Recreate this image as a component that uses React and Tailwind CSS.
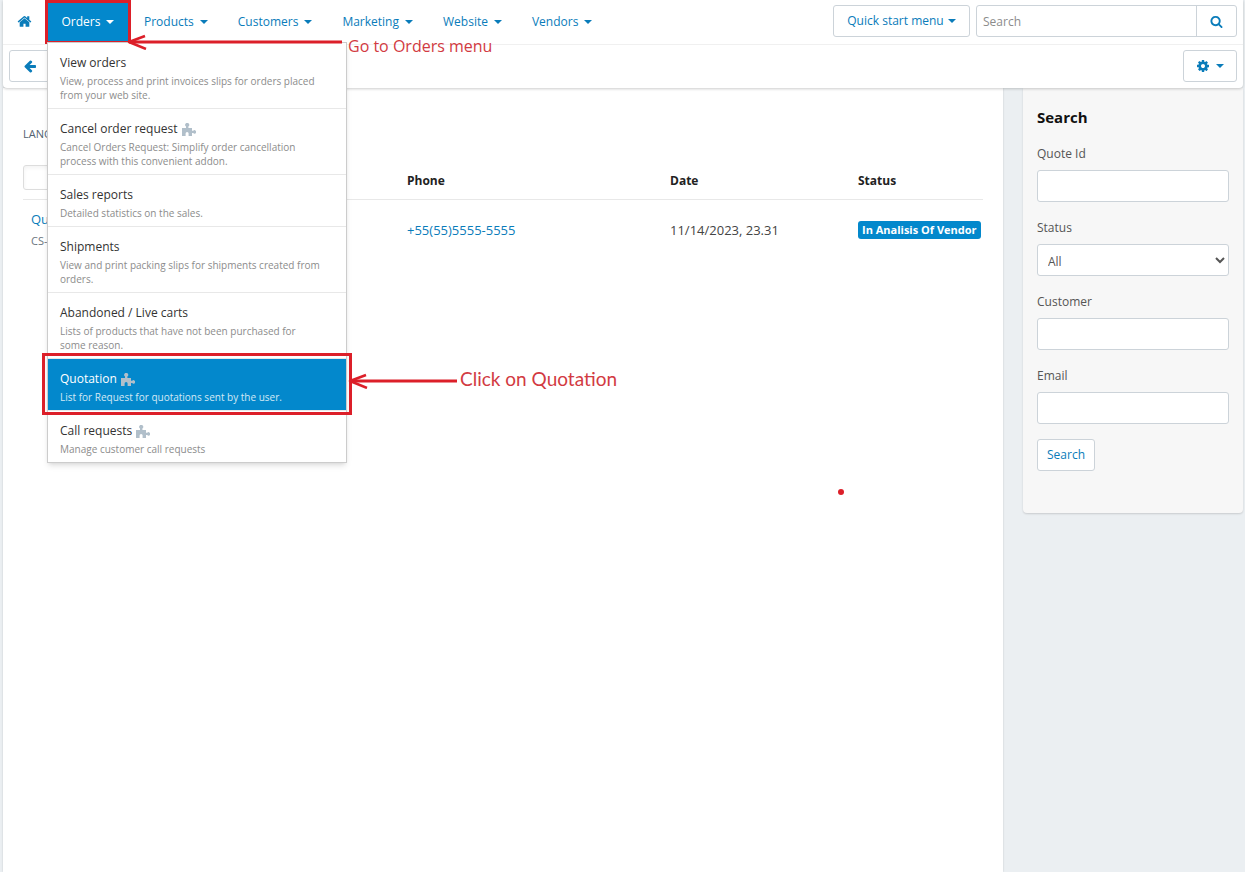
import React from 'react';

const NAV = ['Products', 'Customers', 'Marketing', 'Website', 'Vendors'];

const ORDER_MENU = [
    { title: 'View orders', text: 'View, process and print invoices slips for orders placed\nfrom your web site.' },
    { title: 'Cancel order request', addon: true, text: 'Cancel Orders Request: Simplify order cancellation\nprocess with this convenient addon.' },
    { title: 'Sales reports', text: 'Detailed statistics on the sales.' },
    { title: 'Shipments', text: 'View and print packing slips for shipments created from\norders.' },
    { title: 'Abandoned / Live carts', text: 'Lists of products that have not been purchased for\nsome reason.' },
    { title: 'Quotation', addon: true, active: true, text: 'List for Request for quotations sent by the user.' },
    { title: 'Call requests', addon: true, text: 'Manage customer call requests' },
];

const ICONS = {
    home: 'M1472 992v480q0 26-19 45t-45 19h-384v-384h-256v384h-384q-26 0-45-19t-19-45v-480q0-1 .5-3t.5-3l575-474 575 474q1 2 1 6zm223-69l-62 74q-8 9-21 11h-3q-13 0-21-7l-692-577-692 577q-12 8-24 7-13-2-21-11l-62-74q-8-10-7-23.5t11-21.5l719-599q32-26 76-26t76 26l244 204v-195q0-14 9-23t23-9h192q14 0 23 9t9 23v408l219 182q10 8 11 21.5t-7 23.5z',
    back: 'M1664 896v128q0 53-32.5 90.5t-84.5 37.5h-704l293 294q38 36 38 90t-38 90l-75 76q-37 37-90 37-52 0-91-37l-651-652q-37-37-37-90 0-52 37-91l651-650q38-38 91-38 52 0 90 38l75 74q38 38 38 91t-38 91l-293 293h704q52 0 84.5 37.5t32.5 90.5z',
    search: 'M1216 832q0-185-131.5-316.5t-316.5-131.5-316.5 131.5-131.5 316.5 131.5 316.5 316.5 131.5 316.5-131.5 131.5-316.5zm512 832q0 52-38 90t-90 38q-54 0-90-38l-343-342q-179 124-399 124-143 0-273.5-55.5t-225-150-150-225-55.5-273.5 55.5-273.5 150-225 225-150 273.5-55.5 273.5 55.5 225 150 150 225 55.5 273.5q0 220-124 399l343 343q37 37 37 90z',
    cog: 'M1152 896q0-106-75-181t-181-75-181 75-75 181 75 181 181 75 181-75 75-181zm512-109v222q0 12-8 23t-20 13l-185 28q-19 54-39 91 35 50 107 138 10 12 10 25t-9 23q-27 37-99 108t-94 71q-12 0-26-9l-138-108q-44 23-91 38-16 136-29 186-7 28-36 28h-222q-14 0-24.5-8.5t-11.5-21.5l-28-184q-49-16-90-37l-141 107q-10 9-25 9-14 0-25-11-126-114-165-168-7-10-7-23 0-12 8-23 15-21 51-66.5t54-70.5q-27-50-41-99l-183-27q-13-2-21-12.5t-8-23.5v-222q0-12 8-23t19-13l186-28q14-46 39-92-40-57-107-138-10-12-10-24 0-10 9-23 26-36 98.5-107.5t94.5-71.5q13 0 26 10l138 107q44-23 91-38 16-136 29-186 7-28 36-28h222q14 0 24.5 8.5t11.5 21.5l28 184q49 16 90 37l142-107q9-9 24-9 13 0 25 10 129 119 165 170 7 8 7 22 0 12-8 23-15 21-51 66.5t-54 70.5q26 50 41 98l183 28q13 2 21 12.5t8 23.5z',
};

function Icon({ name, className }) {
    return (
        <svg viewBox="0 0 1792 1792" className={className} fill="currentColor" aria-hidden="true">
            <path d={ICONS[name]} />
        </svg>
    );
}

function Caret() {
    return (
        <svg viewBox="0 0 8 4" className="h-1 w-2 shrink-0" fill="currentColor" aria-hidden="true">
            <path d="M0 0h8L4 4z" />
        </svg>
    );
}

function AddonIcon() {
    return (
        <svg viewBox="0 0 14 13" className="h-[13px] w-[14px] text-[#b1bfca]" fill="currentColor" aria-hidden="true">
            <path d="M0 5h4V3.400a2 2 0 1 1 2.400 0V5H10v2.800h1.200a1.700 1.700 0 1 1 0 2.200H10v3H6.600v-2.400a1.500 1.500 0 0 0-3 0V13H0z" />
        </svg>
    );
}

function Arrow({ className, length }) {
    return (
        <svg width={length} height="16" className={className} fill="none" stroke="#dc1f29" aria-hidden="true">
            <path d={`M2 8H${length}`} strokeWidth="3" />
            <path d="M18 2L2 8l17 7" strokeWidth="2.500" strokeLinejoin="round" />
        </svg>
    );
}

function OrdersMenu() {
    return (
        <ul className="absolute left-[2px] top-[42px] w-[300px] border border-[#ccc] bg-white shadow-md">
            {ORDER_MENU.map((item) => (
                <li key={item.title} className="relative border-b border-[#e8e8e8] last:border-b-0">
                    <a
                        href="#"
                        className={`block px-3 pt-[11px] pb-1.5 ${item.active ? 'bg-[#0388cc] text-white' : 'text-[#333]'}`}
                    >
                        <span className="flex items-center gap-1 leading-[18px]">
                            {item.title}
                            {item.addon && <AddonIcon />}
                        </span>
                        <span className={`mt-0.5 block text-[10px] leading-[14px] whitespace-pre-line ${item.active ? 'text-[#d3e9f5]' : 'text-[#8c8c8c]'}`}>
                            {item.text}
                        </span>
                    </a>
                    {item.active && (
                        <>
                            <span className="pointer-events-none absolute -inset-x-[6px] -top-[6px] -bottom-[5px] border-3 border-[#dc1f29]" />
                            <span className="absolute left-[300px] top-2 flex items-start gap-[3px] whitespace-nowrap">
                                <Arrow length={109} className="mt-1.5 shrink-0" />
                                <span className="font-['Lato',sans-serif] text-[19px] leading-6 text-[#d23a42]">Click on Quotation</span>
                            </span>
                        </>
                    )}
                </li>
            ))}
        </ul>
    );
}

function Header() {
    return (
        <header className="relative z-10 rounded-b bg-white text-[#0a7cba] shadow-[0_1px_3px_rgba(0,0,0,0.2)]">
            <div className="flex h-[45px] items-start justify-between border-b border-[#f0f0f0] pr-1.5">
                <nav className="flex items-start">
                    <a href="#" aria-label="Home" className="mr-[13px] ml-[14px] flex h-[43px] items-center">
                        <Icon name="home" className="size-[15px]" />
                    </a>
                    <div className="relative">
                        <a href="#" className="flex h-11 w-[86px] items-center justify-center gap-1.5 border-3 border-[#dc1f29] bg-[#0388cc] text-white">
                            Orders
                            <Caret />
                        </a>
                        <OrdersMenu />
                        <span className="absolute left-[82px] top-[34px] flex items-start gap-1.5 whitespace-nowrap">
                            <Arrow length={215} className="shrink-0" />
                            <span className="text-base leading-6 text-[#d23a42]">Go to Orders menu</span>
                        </span>
                    </div>
                    {NAV.map((label) => (
                        <a key={label} href="#" className="mr-[17px] ml-[13px] flex h-[43px] items-center gap-1.5">
                            {label}
                            <Caret />
                        </a>
                    ))}
                </nav>
                <div className="flex items-center gap-1.5 pt-[5px]">
                    <button type="button" className="flex h-8 w-[137px] items-center justify-center gap-1 rounded-[3px] border border-[#ccd3d9]">
                        Quick start menu
                        <Caret />
                    </button>
                    <form className="flex h-8 rounded-[3px] border border-[#ccd3d9]">
                        <input type="text" aria-label="Search" placeholder="Search" className="w-[219px] px-1.5 pt-0.5 placeholder:text-[#8c8c8c]" />
                        <button type="button" aria-label="Submit search" className="flex w-10 items-center justify-center border-l border-[#ccd3d9]">
                            <Icon name="search" className="size-[13px]" />
                        </button>
                    </form>
                </div>
            </div>
            <div className="flex h-[43px] items-start justify-between px-1.5 pt-[5px]">
                <button type="button" aria-label="Back" className="flex h-8 w-[42px] items-center justify-center rounded-[3px] border border-[#ccd3d9]">
                    <Icon name="back" className="size-[14px]" />
                </button>
                <button type="button" aria-label="Settings" className="flex h-8 w-[54px] items-center justify-center gap-1.5 rounded-[3px] border border-[#ccd3d9]">
                    <Icon name="cog" className="size-[14px]" />
                    <Caret />
                </button>
            </div>
        </header>
    );
}

function Field({ id, label, children }) {
    return (
        <div className="mb-[15px]">
            <label htmlFor={id} className="mb-[5px] block leading-[22px]">{label}</label>
            {children || <input id={id} type="text" className="block h-8 w-full rounded-[3px] border border-[#ccd3d9] bg-white px-2" />}
        </div>
    );
}

function Sidebar() {
    return (
        <aside className="w-[220px] shrink-0 self-start rounded-b bg-[#f7f7f7] px-[14px] pt-[18px] pb-[42px] text-[#555] shadow-[0_1px_2px_rgba(0,0,0,0.15)]">
            <h2 className="mb-[15px] text-[15px] leading-[22px] font-bold text-[#111]">Search</h2>
            <form>
                <Field id="quote-id" label="Quote Id" />
                <Field id="status" label="Status">
                    <select id="status" className="block h-8 w-full rounded-[3px] border border-[#ccd3d9] bg-white px-1.5 pt-0.5">
                        <option>All</option>
                    </select>
                </Field>
                <Field id="customer" label="Customer" />
                <Field id="email" label="Email" />
                <button type="button" className="h-8 rounded-[3px] border border-[#ccd3d9] bg-white px-[9px] text-[#0a7cba]">Search</button>
            </form>
        </aside>
    );
}

function Quotations() {
    return (
        <main className="relative flex-1 bg-white px-5 pt-9 shadow-[0_0_2px_rgba(0,0,0,0.15)]">
            <p className="text-[11px] leading-5 text-[#536270]">LANGUAGE</p>
            <table className="mt-[17px] w-full table-fixed text-left">
                <thead>
                    <tr className="h-[38px] border-b border-[#e8e8e8] text-[#222]">
                        <th className="w-[384px] pt-1 align-top">
                            <input type="text" aria-label="Quote filter" className="block h-[25px] w-[120px] rounded-[3px] border border-[#ddd] shadow-inner" />
                        </th>
                        <th className="w-[263px] pt-0.5 font-bold">Phone</th>
                        <th className="w-[188px] pt-0.5 font-bold">Date</th>
                        <th className="pt-0.5 font-bold">Status</th>
                    </tr>
                </thead>
                <tbody>
                    <tr className="h-[62px] text-[13px] text-[#444]">
                        <td className="pl-2 leading-[22px]">
                            <a href="#" className="block text-[#0a7cba]">Quotation</a>
                            <span className="block text-[11px] text-[#6b7680]">CS-Cart</span>
                        </td>
                        <td><a href="#" className="text-[#0a7cba]">+55(55)5555-5555</a></td>
                        <td>11/14/2023, 23.31</td>
                        <td>
                            <span className="inline-block rounded-[3px] bg-[#0388cc] px-1 text-[11px] leading-[18px] font-bold whitespace-nowrap text-white">In Analisis Of Vendor</span>
                        </td>
                    </tr>
                </tbody>
            </table>
            <span className="absolute left-[835px] top-[401px] size-1.5 rounded-full bg-[#dc1f29]" />
        </main>
    );
}

export default function App() {
    return (
        <div className="flex min-h-screen flex-col bg-[#ebeff2] pr-0.5 pl-[3px] font-['Open_Sans',sans-serif] text-xs">
            <Header />
            <div className="flex flex-1 gap-5">
                <Quotations />
                <Sidebar />
            </div>
        </div>
    );
}
